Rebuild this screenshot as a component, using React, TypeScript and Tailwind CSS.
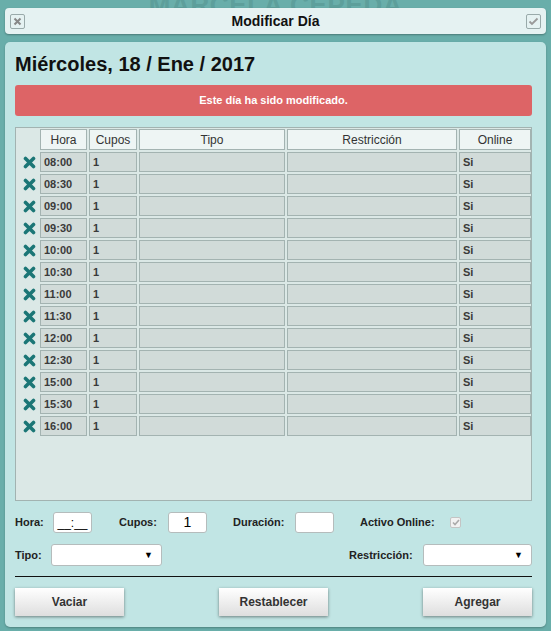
const rows = ['08:00', '08:30', '09:00', '09:30', '10:00', '10:30', '11:00', '11:30', '12:00', '12:30', '15:00', '15:30', '16:00'];

function XIcon() {
  return (
    <svg width="13" height="13" viewBox="0 0 13 13">
      <path d="M2.5 2.5L10.5 10.5M10.5 2.5L2.5 10.5" stroke="#1b7676" strokeWidth="3.6" strokeLinecap="round" />
    </svg>
  );
}

function Select({ width }: { width: string }) {
  return (
    <div className={`${width} h-[22px] bg-white border border-[#b5bcbc] rounded-[3px] flex items-center justify-end pr-[8px]`}>
      <span className="text-[9px] text-black leading-none">▼</span>
    </div>
  );
}

function Button({ label }: { label: string }) {
  return (
    <button className="w-[109px] h-[28px] bg-gradient-to-b from-white to-[#dedede] shadow-[0_1px_3px_rgba(0,0,0,0.45)] text-[12px] font-bold text-[#333]">
      {label}
    </button>
  );
}

export default function App() {
  return (
    <div
      className="w-[551px] h-[631px] bg-[#69aeaa] overflow-hidden relative"
      style={{ fontFamily: '"Liberation Sans", Arial, sans-serif' }}
    >
      {/* name behind the dialog */}
      <div className="absolute top-[-14px] left-0 right-0 text-center text-[26px] font-bold text-[#5d9f9b] tracking-wide">
        MARCELA CEPEDA
      </div>

      {/* title bar */}
      <div className="relative mt-[8px] mx-[5px] h-[26px] rounded-[4px] bg-[#e5f2f2] shadow-[0_1px_2px_rgba(0,0,0,0.3)] flex items-center justify-between px-[5px]">
        <div className="w-[15px] h-[15px] border border-[#9aa] rounded-[2px] flex items-center justify-center">
          <svg width="9" height="9" viewBox="0 0 9 9">
            <path d="M1.5 1.5L7.5 7.5M7.5 1.5L1.5 7.5" stroke="#888" strokeWidth="2" />
          </svg>
        </div>
        <span className="text-[14px] font-bold text-[#111]">Modificar Día</span>
        <div className="w-[15px] h-[15px] border border-[#9aa] rounded-[2px] flex items-center justify-center">
          <svg width="11" height="9" viewBox="0 0 11 9">
            <path d="M1.5 4.5L4 7L9.5 1.5" stroke="#999" strokeWidth="1.8" fill="none" />
          </svg>
        </div>
      </div>

      {/* main panel */}
      <div className="relative mt-[8px] mx-[5px] h-[585px] rounded-[5px] bg-[#c1e5e4] shadow-[0_1px_2px_rgba(0,0,0,0.25)] px-[10px] pt-[10px]">
        <h1 className="text-[20px] leading-[24px] font-bold text-[#111]">Miércoles, 18 / Ene / 2017</h1>

        <div className="mt-[9px] h-[31px] w-[517px] rounded-[3px] bg-[#dd6466] flex items-center justify-center text-[11px] font-bold text-white">
          Este día ha sido modificado.
        </div>

        {/* table */}
        <div className="mt-[11px] w-[517px] h-[374px] border border-[#a2b3b1] bg-[#dbe8e6] p-[1px]">
          <div className="grid grid-cols-[21px_47px_48px_146px_170px_72px] gap-[2px]">
            <div />
            {['Hora', 'Cupos', 'Tipo', 'Restricción', 'Online'].map((h) => (
              <div key={h} className="h-[21px] bg-[#eef5f4] border border-[#a3b3b1] flex items-center justify-center text-[12px] text-[#333]">
                {h}
              </div>
            ))}
            {rows.map((t) => (
              <div key={t} className="contents">
                <div className="h-[20px] flex items-center justify-center pl-[3px]">
                  <XIcon />
                </div>
                <div className="h-[20px] bg-[#d1dbd9] border border-[#a3b3b1] flex items-center pl-[3px] text-[11px] font-bold text-[#3a3a3a]">{t}</div>
                <div className="h-[20px] bg-[#d1dbd9] border border-[#a3b3b1] flex items-center pl-[3px] text-[11px] font-bold text-[#3a3a3a]">1</div>
                <div className="h-[20px] bg-[#d1dbd9] border border-[#a3b3b1]" />
                <div className="h-[20px] bg-[#d1dbd9] border border-[#a3b3b1]" />
                <div className="h-[20px] bg-[#d1dbd9] border border-[#a3b3b1] flex items-center pl-[3px] text-[11px] font-bold text-[#3a3a3a]">Si</div>
              </div>
            ))}
          </div>
        </div>

        {/* form row 1 */}
        <div className="mt-[11px] h-[21px] flex items-center text-[11px] font-bold text-[#222]">
          <span className="w-[38px]">Hora:</span>
          <div className="w-[39px] h-[21px] bg-white border border-[#b5bcbc] rounded-[3px] flex items-center justify-center text-[12px] font-normal text-black">
            __:__
          </div>
          <span className="ml-[27px] w-[49px]">Cupos:</span>
          <div className="w-[39px] h-[21px] bg-white border border-[#b5bcbc] rounded-[3px] flex items-center justify-center text-[14px] font-normal text-black">
            1
          </div>
          <span className="ml-[26px] w-[62px]">Duración:</span>
          <div className="w-[39px] h-[21px] bg-white border border-[#b5bcbc] rounded-[3px]" />
          <span className="ml-[26px] w-[90px]">Activo Online:</span>
          <div className="w-[11px] h-[11px] border border-[#c4c4c4] rounded-[2px] bg-[#f2f2f2] flex items-center justify-center">
            <svg width="8" height="7" viewBox="0 0 8 7">
              <path d="M1 3.5L3 5.5L7 1" stroke="#aaa" strokeWidth="1.6" fill="none" />
            </svg>
          </div>
        </div>

        {/* form row 2 */}
        <div className="mt-[11px] w-[517px] flex items-center justify-between text-[11px] font-bold text-[#222]">
          <div className="flex items-center">
            <span className="w-[36px]">Tipo:</span>
            <Select width="w-[111px]" />
          </div>
          <div className="flex items-center">
            <span className="w-[74px]">Restricción:</span>
            <Select width="w-[109px]" />
          </div>
        </div>

        <div className="mt-[10px] w-[517px] h-px bg-[#111]" />

        <div className="mt-[11px] w-[517px] flex justify-between">
          <Button label="Vaciar" />
          <Button label="Restablecer" />
          <Button label="Agregar" />
        </div>
      </div>
    </div>
  );
}
